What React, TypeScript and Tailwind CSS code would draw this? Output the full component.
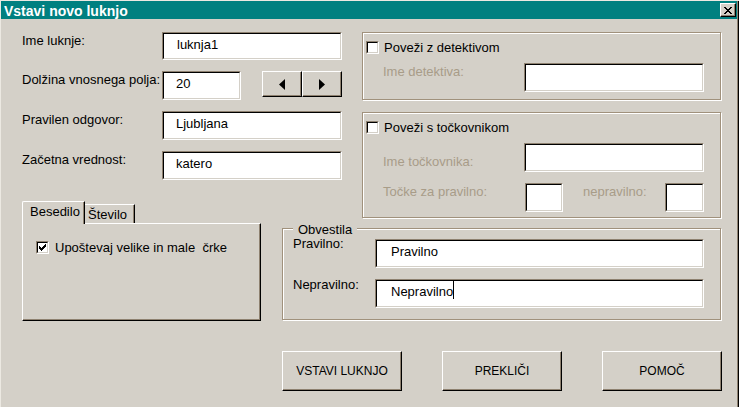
import type { ReactNode } from 'react';

// sunken text box (classic 3D border)
function Sunken({ className, children }: { className: string; children?: ReactNode }) {
  return (
    <div className={`border border-t-[#8e8170] border-l-[#8e8170] border-b-white border-r-white ${className}`}>
      <div className="h-full w-full border border-t-black border-l-black border-b-[#d4d0c8] border-r-[#d4d0c8] bg-white">
        {children}
      </div>
    </div>
  );
}

function CheckBox({ checked }: { checked?: boolean }) {
  return (
    <div className="w-[13px] h-[13px] shrink-0 border border-t-[#8e8170] border-l-[#8e8170] border-b-white border-r-white">
      <div className="h-full w-full border border-t-black border-l-black border-b-[#d4d0c8] border-r-[#d4d0c8] bg-white">
        {checked && (
          <svg width="7" height="7" viewBox="0 0 7 7" className="ml-px mt-px" shapeRendering="crispEdges">
            <path d="M6 0h1v1H6zM5 1h2v1H5zM0 2h1v1H0zM4 2h3v1H4zM0 3h2v1H0zM3 3h3v1H3zM0 4h5v1H0zM1 5h3v1H1zM2 6h1v1H2z" fill="#000" />
          </svg>
        )}
      </div>
    </div>
  );
}

function Arrow({ dir }: { dir: 'left' | 'right' }) {
  return (
    <svg width="6" height="11" viewBox="0 0 6 11">
      <path d={dir === 'left' ? 'M6 0L0 5.5L6 11Z' : 'M0 0L6 5.5L0 11Z'} fill="#000" />
    </svg>
  );
}

export default function App() {
  const raised =
    'border border-t-white border-l-white border-b-black border-r-black shadow-[inset_-1px_-1px_0_#8e8170] bg-[#d4d0c8] flex items-center justify-center';
  const etched = 'border border-[#a0917c] shadow-[inset_1px_1px_0_#fff,1px_1px_0_#fff]';
  const disabled = 'text-[#a89c88]';

  return (
    <div className="w-[739px] h-[407px] overflow-hidden bg-[#d4d0c8] text-black text-[13px] leading-[15px] font-['Liberation_Sans',Arial,sans-serif] shadow-[inset_1px_1px_0_#ece9e2,inset_-1px_0_0_#000,inset_-2px_0_0_#8e8170]">
      {/* Title bar */}
      <div className="ml-[1px] mr-[2px] mt-[1px] h-[18px] bg-[#008080] flex justify-between items-start">
        <div className="pl-[3px] pt-[2px] text-white font-bold text-[14px] leading-[16px]">Vstavi novo luknjo</div>
        <button className={`${raised} w-[16px] h-[14px] mt-[2px] mr-[1px]`}>
          <svg width="8" height="7" viewBox="0 0 8 7" shapeRendering="crispEdges">
            <path d="M0 0h2v1H0zM6 0h2v1H6zM1 1h2v1H1zM5 1h2v1H5zM2 2h4v1H2zM3 3h2v1H3zM2 4h4v1H2zM1 5h2v1H1zM5 5h2v1H5zM0 6h2v1H0zM6 6h2v1H6z" fill="#000" />
          </svg>
        </button>
      </div>

      <div className="pl-[22px] pt-[13px]">
        <div className="flex gap-[20px]">
          {/* Left column */}
          <div className="w-[320px]">
            <div className="flex h-[39px]">
              <div className="w-[140px] pt-[1px]">Ime luknje:</div>
              <Sunken className="w-[180px] h-[28px]">
                <div className="pl-[13px] pt-[3px]">luknja1</div>
              </Sunken>
            </div>
            <div className="flex h-[40px]">
              <div className="w-[140px] pt-[1px]">Dolžina vnosnega polja:</div>
              <Sunken className="w-[79px] h-[29px]">
                <div className="pl-[12px] pt-[3px]">20</div>
              </Sunken>
              <div className="flex ml-[21px]">
                <button className={`${raised} w-[40px] h-[26px]`}>
                  <Arrow dir="left" />
                </button>
                <button className={`${raised} w-[40px] h-[26px]`}>
                  <Arrow dir="right" />
                </button>
              </div>
            </div>
            <div className="flex h-[40px]">
              <div className="w-[140px] pt-[1px]">Pravilen odgovor:</div>
              <Sunken className="w-[180px] h-[29px]">
                <div className="pl-[12px] pt-[3px]">Ljubljana</div>
              </Sunken>
            </div>
            <div className="flex h-[50px]">
              <div className="w-[140px] pt-[1px]">Začetna vrednost:</div>
              <Sunken className="w-[180px] h-[29px]">
                <div className="pl-[12px] pt-[3px]">katero</div>
              </Sunken>
            </div>

            {/* Tabs */}
            <div className="w-[239px]">
              <div className="flex items-end h-[22px]">
                <div className="relative z-10 w-[63px] h-[23px] -mb-px bg-[#d4d0c8] border-t border-l border-r border-t-white border-l-white border-r-black shadow-[inset_-1px_0_0_#8e8170] rounded-tl-[2px] pl-[7px] pt-[2px]">
                  Besedilo
                </div>
                <div className="w-[50px] h-[19px] border-t border-r border-t-white border-r-black shadow-[inset_-1px_0_0_#8e8170] pl-[3px] pt-[2px]">
                  Število
                </div>
              </div>
              <div className="h-[98px] border border-t-white border-l-white border-b-black border-r-black shadow-[inset_-1px_-1px_0_#8e8170] pl-[13px] pt-[17px]">
                <div className="flex items-center h-[13px]">
                  <CheckBox checked />
                  <span className="ml-[6px] whitespace-pre">Upoštevaj velike in male  črke</span>
                </div>
              </div>
            </div>
          </div>

          {/* Right column */}
          <div className="w-[359px]">
            <div className={`${etched} h-[68px] pl-[3px] pt-[8px]`}>
              <div className="flex items-center h-[13px]">
                <CheckBox />
                <span className="ml-[5px]">Poveži z detektivom</span>
              </div>
              <div className="flex items-start mt-[9px] pl-[17px]">
                <div className={`w-[141px] mt-[1px] ${disabled}`}>Ime detektiva:</div>
                <Sunken className="w-[180px] h-[29px]" />
              </div>
            </div>

            <div className={`${etched} mt-[12px] h-[106px] pl-[3px] pt-[8px]`}>
              <div className="flex items-center h-[13px]">
                <CheckBox />
                <span className="ml-[5px]">Poveži s točkovnikom</span>
              </div>
              <div className="flex items-start mt-[9px] pl-[17px]">
                <div className={`w-[141px] mt-[11px] ${disabled}`}>Ime točkovnika:</div>
                <Sunken className="w-[180px] h-[29px]" />
              </div>
              <div className="flex items-start mt-[11px] pl-[17px]">
                <div className={`w-[142px] mt-[1px] ${disabled}`}>Točke za pravilno:</div>
                <Sunken className="w-[38px] h-[29px]" />
                <div className={`w-[82px] ml-[20px] mt-[1px] ${disabled}`}>nepravilno:</div>
                <Sunken className="w-[39px] h-[29px]" />
              </div>
            </div>

            <div className={`${etched} mt-[10px] -ml-[80px] w-[439px] h-[92px]`}>
              <span className="block w-fit ml-[10px] px-[5px] -mt-[6px] leading-[13px] bg-[#d4d0c8]">Obvestila</span>
              <div className="pl-[10px]">
                <div className="flex items-start h-[32px]">
                  <div className="w-[82px] mt-[1px] leading-[13px]">Pravilno:</div>
                  <Sunken className="w-[329px] h-[29px] mt-[3px]">
                    <div className="pl-[14px] pt-[3px]">Pravilno</div>
                  </Sunken>
                </div>
                <div className="flex items-start mt-[9px]">
                  <div className="w-[82px]">Nepravilno:</div>
                  <Sunken className="w-[329px] h-[29px] mt-[2px]">
                    <div className="flex items-start pl-[14px]">
                      <span className="mt-[3px]">Nepravilno</span>
                      <span className="w-px h-[18px] bg-black" />
                    </div>
                  </Sunken>
                </div>
              </div>
            </div>
          </div>
        </div>

        {/* Buttons */}
        <div className="flex gap-[40px] ml-[260px] mt-[30px] text-[12px]">
          <button className={`${raised} w-[120px] h-[40px]`}>VSTAVI LUKNJO</button>
          <button className={`${raised} w-[120px] h-[40px]`}>PREKLIČI</button>
          <button className={`${raised} w-[120px] h-[40px]`}>POMOČ</button>
        </div>
      </div>
    </div>
  );
}
